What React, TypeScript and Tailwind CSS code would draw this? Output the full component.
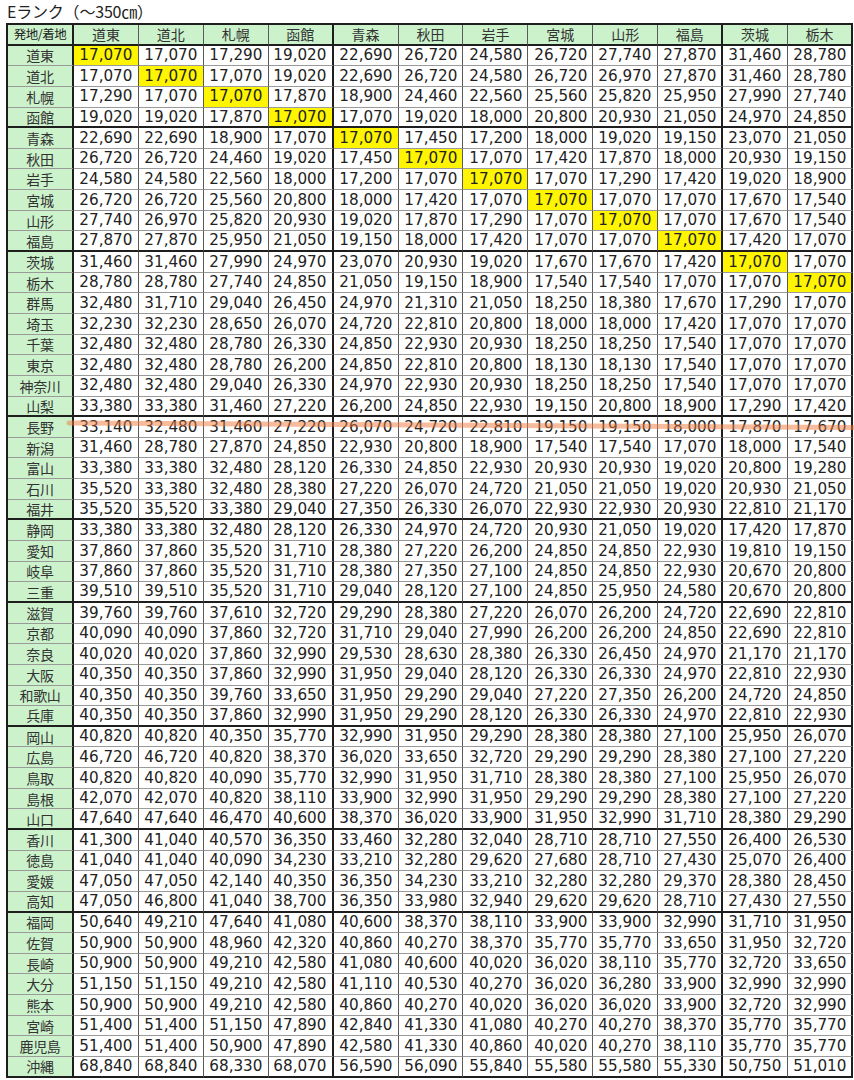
import React from 'react'

const COLS = ['道東', '道北', '札幌', '函館', '青森', '秋田', '岩手', '宮城', '山形', '福島', '茨城', '栃木']

// 発地ごとの運賃（Eランク）
const ROWS: [string, string][] = [
  ['道東', '17,070 17,070 17,290 19,020 22,690 26,720 24,580 26,720 27,740 27,870 31,460 28,780'],
  ['道北', '17,070 17,070 17,070 19,020 22,690 26,720 24,580 26,720 26,970 27,870 31,460 28,780'],
  ['札幌', '17,290 17,070 17,070 17,870 18,900 24,460 22,560 25,560 25,820 25,950 27,990 27,740'],
  ['函館', '19,020 19,020 17,870 17,070 17,070 19,020 18,000 20,800 20,930 21,050 24,970 24,850'],
  ['青森', '22,690 22,690 18,900 17,070 17,070 17,450 17,200 18,000 19,020 19,150 23,070 21,050'],
  ['秋田', '26,720 26,720 24,460 19,020 17,450 17,070 17,070 17,420 17,870 18,000 20,930 19,150'],
  ['岩手', '24,580 24,580 22,560 18,000 17,200 17,070 17,070 17,070 17,290 17,420 19,020 18,900'],
  ['宮城', '26,720 26,720 25,560 20,800 18,000 17,420 17,070 17,070 17,070 17,070 17,670 17,540'],
  ['山形', '27,740 26,970 25,820 20,930 19,020 17,870 17,290 17,070 17,070 17,070 17,670 17,540'],
  ['福島', '27,870 27,870 25,950 21,050 19,150 18,000 17,420 17,070 17,070 17,070 17,420 17,070'],
  ['茨城', '31,460 31,460 27,990 24,970 23,070 20,930 19,020 17,670 17,670 17,420 17,070 17,070'],
  ['栃木', '28,780 28,780 27,740 24,850 21,050 19,150 18,900 17,540 17,540 17,070 17,070 17,070'],
  ['群馬', '32,480 31,710 29,040 26,450 24,970 21,310 21,050 18,250 18,380 17,670 17,290 17,070'],
  ['埼玉', '32,230 32,230 28,650 26,070 24,720 22,810 20,800 18,000 18,000 17,420 17,070 17,070'],
  ['千葉', '32,480 32,480 28,780 26,330 24,850 22,930 20,930 18,250 18,250 17,540 17,070 17,070'],
  ['東京', '32,480 32,480 28,780 26,200 24,850 22,810 20,800 18,130 18,130 17,540 17,070 17,070'],
  ['神奈川', '32,480 32,480 29,040 26,330 24,970 22,930 20,930 18,250 18,250 17,540 17,070 17,070'],
  ['山梨', '33,380 33,380 31,460 27,220 26,200 24,850 22,930 19,150 20,800 18,900 17,290 17,420'],
  ['長野', '33,140 32,480 31,460 27,220 26,070 24,720 22,810 19,150 19,150 18,000 17,870 17,670'],
  ['新潟', '31,460 28,780 27,870 24,850 22,930 20,800 18,900 17,540 17,540 17,070 18,000 17,540'],
  ['富山', '33,380 33,380 32,480 28,120 26,330 24,850 22,930 20,930 20,930 19,020 20,800 19,280'],
  ['石川', '35,520 33,380 32,480 28,380 27,220 26,070 24,720 21,050 21,050 19,020 20,930 21,050'],
  ['福井', '35,520 35,520 33,380 29,040 27,350 26,330 26,070 22,930 22,930 20,930 22,810 21,170'],
  ['静岡', '33,380 33,380 32,480 28,120 26,330 24,970 24,720 20,930 21,050 19,020 17,420 17,870'],
  ['愛知', '37,860 37,860 35,520 31,710 28,380 27,220 26,200 24,850 24,850 22,930 19,810 19,150'],
  ['岐阜', '37,860 37,860 35,520 31,710 28,380 27,350 27,100 24,850 24,850 22,930 20,670 20,800'],
  ['三重', '39,510 39,510 35,520 31,710 29,040 28,120 27,100 24,850 25,950 24,580 20,670 20,800'],
  ['滋賀', '39,760 39,760 37,610 32,720 29,290 28,380 27,220 26,070 26,200 24,720 22,690 22,810'],
  ['京都', '40,090 40,090 37,860 32,720 31,710 29,040 27,990 26,200 26,200 24,850 22,690 22,810'],
  ['奈良', '40,020 40,020 37,860 32,990 29,530 28,630 28,380 26,330 26,450 24,970 21,170 21,170'],
  ['大阪', '40,350 40,350 37,860 32,990 31,950 29,040 28,120 26,330 26,330 24,970 22,810 22,930'],
  ['和歌山', '40,350 40,350 39,760 33,650 31,950 29,290 29,040 27,220 27,350 26,200 24,720 24,850'],
  ['兵庫', '40,350 40,350 37,860 32,990 31,950 29,290 28,120 26,330 26,330 24,970 22,810 22,930'],
  ['岡山', '40,820 40,820 40,350 35,770 32,990 31,950 29,290 28,380 28,380 27,100 25,950 26,070'],
  ['広島', '46,720 46,720 40,820 38,370 36,020 33,650 32,720 29,290 29,290 28,380 27,100 27,220'],
  ['鳥取', '40,820 40,820 40,090 35,770 32,990 31,950 31,710 28,380 28,380 27,100 25,950 26,070'],
  ['島根', '42,070 42,070 40,820 38,110 33,900 32,990 31,950 29,290 29,290 28,380 27,100 27,220'],
  ['山口', '47,640 47,640 46,470 40,600 38,370 36,020 33,900 31,950 32,990 31,710 28,380 29,290'],
  ['香川', '41,300 41,040 40,570 36,350 33,460 32,280 32,040 28,710 28,710 27,550 26,400 26,530'],
  ['徳島', '41,040 41,040 40,090 34,230 33,210 32,280 29,620 27,680 28,710 27,430 25,070 26,400'],
  ['愛媛', '47,050 47,050 42,140 40,350 36,350 34,230 33,210 32,280 32,280 29,370 28,380 28,450'],
  ['高知', '47,050 46,800 41,040 38,700 36,350 33,980 32,940 29,620 29,620 28,710 27,430 27,550'],
  ['福岡', '50,640 49,210 47,640 41,080 40,600 38,370 38,110 33,900 33,900 32,990 31,710 31,950'],
  ['佐賀', '50,900 50,900 48,960 42,320 40,860 40,270 38,370 35,770 35,770 33,650 31,950 32,720'],
  ['長崎', '50,900 50,900 49,210 42,580 41,080 40,600 40,020 36,020 38,110 35,770 32,720 33,650'],
  ['大分', '51,150 51,150 49,210 42,580 41,110 40,530 40,270 36,020 36,280 33,900 32,990 32,990'],
  ['熊本', '50,900 50,900 49,210 42,580 40,860 40,270 40,020 36,020 36,020 33,900 32,720 32,990'],
  ['宮崎', '51,400 51,400 51,150 47,890 42,840 41,330 41,080 40,270 40,270 38,370 35,770 35,770'],
  ['鹿児島', '51,400 51,400 50,900 47,890 42,580 41,330 40,860 40,020 40,270 38,110 35,770 35,770'],
  ['沖縄', '68,840 68,840 68,330 68,070 56,590 56,090 55,840 55,580 55,580 55,330 50,750 51,010'],
]

// 地域の区切り（この行のあとに太線）
const GROUP_END = [3, 9, 17, 22, 26, 32, 37, 41, 49]
// 太線を引く列（この列の右）
const THICK_COL = [0, 4, 10, 12]

function rightBorder(col: number) {
  return THICK_COL.includes(col) ? 'border-r-2 border-r-[#1e1e1e]' : 'border-r border-r-[#5a5a5a]'
}

function bottomBorder(thick: boolean) {
  return thick ? 'border-b-2 border-b-[#1e1e1e]' : 'border-b border-b-[#9a9a9a]'
}

const JP = { fontFamily: '"Noto Sans CJK JP", "Noto Sans", sans-serif' }
const NUM = { fontFamily: '"DejaVu Sans", Verdana, sans-serif' }

export default function App() {
  return (
    <div className="relative w-[854px] h-[1080px] bg-white text-[#222]" style={JP}>
      <div className="h-[23px] pl-[7px] text-[16px] leading-[22px] tracking-[-0.2px]">
        Eランク（～350㎝）
      </div>

      <div className="ml-[6px] w-[847px] grid grid-cols-[66px_repeat(12,minmax(0,1fr))] auto-rows-[20.65px] border-l-2 border-t-2 border-[#1e1e1e]">
        <div className={`flex items-center justify-center bg-[#ccf2cc] text-[12.5px] leading-none tracking-[-0.5px] ${rightBorder(0)} ${bottomBorder(true)}`}>
          発地/着地
        </div>
        {COLS.map((c, i) => (
          <div
            key={c}
            className={`flex items-center justify-center bg-[#ccf2cc] text-[14px] leading-none text-[#333] ${rightBorder(i + 1)} ${bottomBorder(true)}`}
          >
            {c}
          </div>
        ))}

        {ROWS.map(([name, line], r) => {
          const thick = GROUP_END.includes(r)
          return (
            <React.Fragment key={name}>
              <div className={`flex items-center justify-center bg-[#ccf2cc] text-[14px] leading-none text-[#333] tracking-[-0.3px] ${rightBorder(0)} ${bottomBorder(thick)}`}>
                {name}
              </div>
              {line.split(' ').map((v, c) => (
                <div
                  key={c}
                  style={NUM}
                  className={`flex items-center justify-center ${r === c ? 'bg-[#fff500]' : 'bg-white'} ${rightBorder(c + 1)} ${bottomBorder(thick)}`}
                >
                  <span className="text-[16.5px] leading-none scale-x-[0.92] whitespace-nowrap">{v}</span>
                </div>
              ))}
            </React.Fragment>
          )
        })}
      </div>

      {/* 長野の行にひいたマーカー */}
      <svg className="absolute left-0 top-0 pointer-events-none" width="854" height="1080">
        <line x1="69" y1="423" x2="854" y2="427.5" stroke="#f07a3c" strokeOpacity="0.5" strokeWidth="5" strokeLinecap="round" />
      </svg>
    </div>
  )
}
